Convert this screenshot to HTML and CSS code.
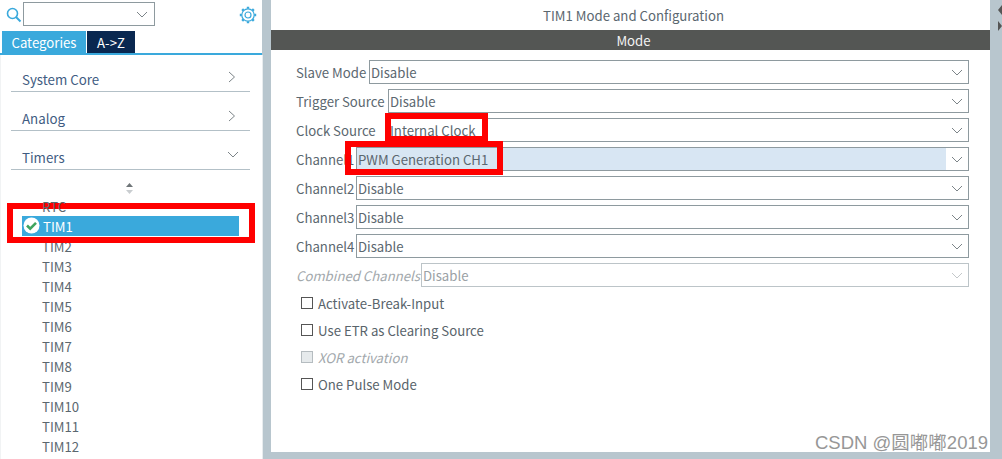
FILE: index.html
```html
<!DOCTYPE html>
<html lang="en">
<head>
<meta charset="utf-8">
<title>TIM1 Mode and Configuration</title>
<link rel="stylesheet" href="styles.css">
</head>
<body>
<div class="app">
  <aside class="side">
    <div class="search">
      <svg class="search-icon" width="16" height="16" viewBox="0 0 16 16"><circle cx="6.500" cy="6.500" r="5" fill="none" stroke="#3aa9dc" stroke-width="1.600"/><path d="M10 10l4.500 4.500" stroke="#3aa9dc" stroke-width="2" fill="none"/></svg>
      <div class="combo"><svg width="12" height="7" viewBox="0 0 12 7"><path d="M1 1l5 5 5-5" fill="none" stroke="#7c8488" stroke-width="1"/></svg></div>
      <svg class="gear" width="18" height="18" viewBox="0 0 18 18"><g fill="none" stroke="#3aa9dc"><circle cx="9" cy="9" r="3" stroke-width="1.200"/><circle cx="9" cy="9" r="6.200" stroke-width="1.200"/><path d="M9 .8v2M9 15.200v2M.8 9h2M15.200 9h2M3.200 3.200l1.400 1.400M13.400 13.400l1.400 1.400M14.800 3.200l-1.400 1.400M4.600 13.400l-1.400 1.400" stroke-width="2.400"/></g></svg>
    </div>
    <div class="tabs"><span class="tab tab-on">Categories</span><span class="tab tab-off">A-&gt;Z</span></div>
    <div class="cats">
      <div class="cat"><span>System Core</span><svg width="8" height="12" viewBox="0 0 8 12"><path d="M1 1l5.500 5-5.500 5" fill="none" stroke="#7c8488"/></svg></div>
      <div class="cat"><span>Analog</span><svg width="8" height="12" viewBox="0 0 8 12"><path d="M1 1l5.500 5-5.500 5" fill="none" stroke="#7c8488"/></svg></div>
      <div class="cat"><span>Timers</span><svg class="down" width="12" height="8" viewBox="0 0 12 8"><path d="M1 1l5 5 5-5" fill="none" stroke="#7c8488"/></svg></div>
      <div class="sort"><svg width="9" height="11" viewBox="0 0 9 11"><path d="M4.500 0L8 4H1z" fill="#6f7578"/><path d="M4.500 11L8 7H1z" fill="#c9cdd0"/></svg></div>
      <ul class="list">
        <li class="clip">RTC</li>
        <li class="sel"><svg class="ok" width="17" height="17" viewBox="0 0 17 17"><circle cx="8.500" cy="8.500" r="8" fill="#fff"/><path d="M4 8.500l3.200 3.200L13 5.800" fill="none" stroke="#3fa45f" stroke-width="2.600"/></svg>TIM1</li>
        <li>TIM2</li><li>TIM3</li><li>TIM4</li><li>TIM5</li><li>TIM6</li><li>TIM7</li><li>TIM8</li><li>TIM9</li><li>TIM10</li><li>TIM11</li><li>TIM12</li>
      </ul>
    </div>
  </aside>
  <main class="main">
    <h1 class="title">TIM1 Mode and Configuration</h1>
    <div class="bar">Mode</div>
    <div class="form">
      <div class="row"><label class="w-slave">Slave Mode</label><div class="select"><span>Disable</span><svg width="12" height="7" viewBox="0 0 12 7"><path d="M1 1l5 5 5-5" fill="none" stroke="#7c8488"/></svg></div></div>
      <div class="row"><label class="w-trigger">Trigger Source</label><div class="select"><span>Disable</span><svg width="12" height="7" viewBox="0 0 12 7"><path d="M1 1l5 5 5-5" fill="none" stroke="#7c8488"/></svg></div></div>
      <div class="row"><label class="w-trigger">Clock Source</label><div class="select"><span>Internal Clock</span><svg width="12" height="7" viewBox="0 0 12 7"><path d="M1 1l5 5 5-5" fill="none" stroke="#7c8488"/></svg></div></div>
      <div class="row"><label class="w-chan">Channel1</label><div class="select active"><span>PWM Generation CH1</span><svg width="12" height="7" viewBox="0 0 12 7"><path d="M1 1l5 5 5-5" fill="none" stroke="#7c8488"/></svg></div></div>
      <div class="row"><label class="w-chan">Channel2</label><div class="select"><span>Disable</span><svg width="12" height="7" viewBox="0 0 12 7"><path d="M1 1l5 5 5-5" fill="none" stroke="#7c8488"/></svg></div></div>
      <div class="row"><label class="w-chan">Channel3</label><div class="select"><span>Disable</span><svg width="12" height="7" viewBox="0 0 12 7"><path d="M1 1l5 5 5-5" fill="none" stroke="#7c8488"/></svg></div></div>
      <div class="row"><label class="w-chan">Channel4</label><div class="select"><span>Disable</span><svg width="12" height="7" viewBox="0 0 12 7"><path d="M1 1l5 5 5-5" fill="none" stroke="#7c8488"/></svg></div></div>
      <div class="row off"><label class="w-comb">Combined Channels</label><div class="select"><span>Disable</span><svg width="12" height="7" viewBox="0 0 12 7"><path d="M1 1l5 5 5-5" fill="none" stroke="#c4c8ca"/></svg></div></div>
      <div class="checks">
        <div class="check"><i class="box"></i>Activate-Break-Input</div>
        <div class="check"><i class="box"></i>Use ETR as Clearing Source</div>
        <div class="check check-off"><i class="box"></i>XOR activation</div>
        <div class="check"><i class="box"></i>One Pulse Mode</div>
      </div>
    </div>
  </main>
  <div class="edge"><svg width="4" height="28" viewBox="0 0 4 28"><path d="M4 0v10L0 5zM0 16v10l4-5z" fill="#555"/></svg></div>
</div>
<div class="mark red-tim"></div>
<div class="mark red-clock"></div>
<div class="mark red-chan"></div>
<div class="water">CSDN @圆嘟嘟2019</div>
</body>
</html>
```
FILE: styles.css
```css
* { box-sizing: border-box; }
html, body { margin: 0; height: 100%; overflow: hidden; }
body { background: #b8c6ce; font-family: "Noto Sans CJK SC", "Noto Sans", sans-serif; font-size: 13.2px; color: #5b676f; }
.app { display: flex; height: 452px; width: 1002px; }
.side { width: 262px; height: 459px; background: #fff; flex: none; display: flex; flex-direction: column; }
.search { height: 31px; display: flex; align-items: flex-start; padding: 2px 5px 0 6px; }
.search-icon { margin-top: 5px; flex: none; }
.combo { width: 132px; height: 24px; margin-left: 1px; border: 1px solid #8e9a9f; display: flex; align-items: center; justify-content: flex-end; padding-right: 6px; }
.gear { margin: 4px 0 0 auto; }
.tabs { height: 24px; display: flex; padding-left: 2px; gap: 1px; border-bottom: 2px solid #3aa9dc; }
.tab { height: 22px; display: flex; align-items: center; justify-content: center; font-size: 13.2px; color: #fff; }
.tab-on { width: 84px; background: #3aa9dc; }
.tab-off { width: 48px; background: #0a2850; }
.cats { flex: 1; overflow: hidden; padding: 0 12px 0 11px; border-left: 1px solid #f1f3f4; border-right: 1px solid #e8ecee; margin-right: -1px; }
.cat { height: 39px; border-bottom: 1px solid #b3c0c7; display: flex; align-items: flex-end; justify-content: space-between; padding: 0 14px 0 11px; color: #3f5c82; font-size: 13.3px; margin-left: -1px; }
.cat span { line-height: 22px; }
.cat svg { margin-bottom: 8px; }
.cat:first-child { height: 37px; }
.cat .down { margin-bottom: 10px; margin-right: -3px; }
.sort { height: 32px; display: flex; align-items: center; justify-content: center; padding-top: 4px; }
.sort svg { margin-left: -3px; }
.list { list-style: none; margin: 0; padding: 0 0 0 10px; }
.list li { height: 20px; line-height: 22px; padding-left: 20px; position: relative; width: 217px; }
.list .clip { margin-top: -6px; z-index: 1; clip-path: inset(6px 0 0 0); }
.list .sel { background: #3aa9dc; color: #fff; padding-left: 21px; }
.ok { position: absolute; left: 1px; top: 1px; }
.main { width: 719px; margin-left: 9px; background: #fff; flex: none; }
.title { margin: 0; height: 30px; font-size: 13.2px; font-weight: 400; text-align: center; line-height: 32px; color: #5b676f; padding-left: 6px; }
.bar { height: 20px; background: #545654; color: #f2f2f2; font-size: 13.2px; text-align: center; line-height: 22px; padding-left: 6px; }
.form { padding: 10px 21px 0 25px; display: flex; flex-direction: column; gap: 5px; }
.row { display: flex; height: 24px; align-items: center; }
.row label { flex: none; white-space: nowrap; }
.w-slave { width: 73px; }
.w-trigger { width: 92px; }
.w-chan { width: 60px; }
.w-comb { width: 125px; }
.select { flex: 1; height: 24px; border: 1px solid #8e9a9f; display: flex; align-items: center; justify-content: space-between; padding: 0 5px 0 1px; background: #fff; }
.active { background: linear-gradient(to right, #d8e6f3 589px, #fff 589px); }
.off label { font-style: italic; color: #a2a8ac; }
.off .select { border-color: #bcc4c8; color: #9aa1a5; }
.checks { display: flex; flex-direction: column; gap: 7px; padding: 1px 0 0 5px; }
.check { height: 20px; display: flex; align-items: center; color: #59646b; }
.box { width: 12px; height: 12px; border: 1px solid #555; margin-right: 5px; flex: none; }
.check-off { font-style: italic; color: #a2a8ac; }
.check-off .box { border-color: #b5bcc0; background: #e6eaec; }
.edge { flex: 1; padding: 5px 0 0 8px; }
.edge svg { display: block; }
.mark { position: absolute; border: 6px solid #ff0000; }
.red-tim { left: 7px; top: 203px; width: 248px; height: 40px; }
.red-clock { left: 385px; top: 113px; width: 103px; height: 28px; border-bottom-width: 5px; }
.red-chan { left: 345px; top: 141px; width: 158px; height: 34px; }
.water { position: absolute; right: 14px; top: 428px; font-family: "Liberation Sans", "Noto Sans CJK SC", sans-serif; font-size: 18.5px; color: #979797; white-space: nowrap; }
```
